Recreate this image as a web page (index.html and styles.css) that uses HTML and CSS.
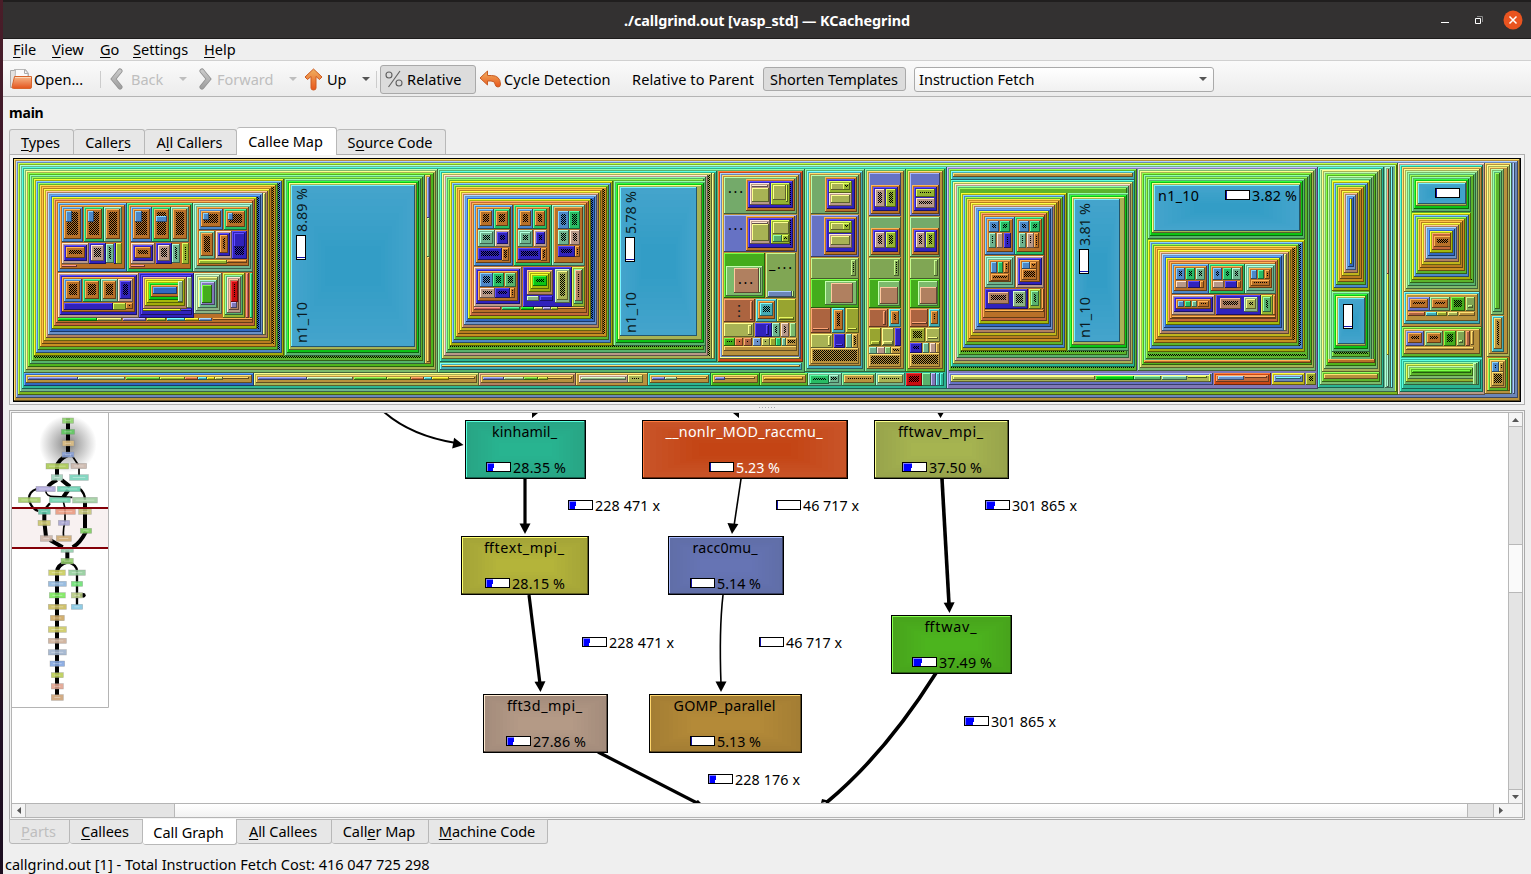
FILE: index.html
```html
<!DOCTYPE html>
<html lang="en">
<head>
<meta charset="utf-8">
<title>./callgrind.out [vasp_std] — KCachegrind</title>
<link rel="stylesheet" href="styles.css">
</head>
<body>
<div class="desktop">
<div class="window">
  <header class="titlebar">
    <span class="title">./callgrind.out [vasp_std] — KCachegrind</span>
    <svg class="winbtns" width="91" height="36" viewBox="0 0 91 36">
      <path d="M1 20.500h8" stroke="#fff"/>
      <path d="M35.500 16.500h5v5h-5z" fill="none" stroke="#fff"/>
      <path d="M37 14.500h5.500v5.500" fill="none" stroke="#888"/>
      <circle cx="73" cy="18" r="9.500" fill="#e95420"/>
      <path d="M69.500 14.500l7 7m0-7l-7 7" stroke="#fff" stroke-width="1.500"/>
    </svg>
  </header>
  <nav class="menubar">
    <span class="m1"><u>F</u>ile</span><span class="m2"><u>V</u>iew</span><span class="m3"><u>G</u>o</span><span class="m4"><u>S</u>ettings</span><span><u>H</u>elp</span>
  </nav>
  <div class="toolbar">
    <svg class="i-open" width="24" height="22" viewBox="0 0 24 22">
      <defs>
        <linearGradient id="og" x1="0" y1="0" x2="0" y2="1"><stop offset="0" stop-color="#f6b98c"/><stop offset="1" stop-color="#e4541c"/></linearGradient>
        <linearGradient id="ug" x1="0" y1="0" x2="0" y2="1"><stop offset="0" stop-color="#f0b060"/><stop offset="1" stop-color="#e8561c"/></linearGradient>
        <linearGradient id="gg" x1="0" y1="0" x2="0" y2="1"><stop offset="0" stop-color="#c8c8c8"/><stop offset="1" stop-color="#a0a0a0"/></linearGradient>
      </defs>
      <path d="M.5 2.500h4v-1h11l3 4v14h-18z" fill="#e4e2e0" stroke="#aaa"/>
      <path d="M5.500 1.500h9l3.500 4v6h-13z" fill="#fafafa" stroke="#b8b8b8"/>
      <path d="M14.500 1.500v4H18" fill="none" stroke="#aaa"/>
      <path d="M4.500 8.500h17v10.500q0 1.500-1.500 1.500H3.500q-1.500 0-1.500-1.500z" fill="url(#og)" stroke="#d8652c"/>
      <path d="M5 9.500h16" stroke="#fbd8b8"/>
    </svg>
    <span class="t-open">Open...</span>
    <i class="sep s1"></i>
    <svg class="i-back" width="13" height="22" viewBox="0 0 13 22"><path d="M10 3L3.500 11l6.500 8" fill="none" stroke="#909090" stroke-width="5" stroke-linecap="round"/><path d="M10 3L3.500 11l6.500 8" fill="none" stroke="url(#gg)" stroke-width="3.500" stroke-linecap="round"/></svg>
    <span class="t-back off">Back</span>
    <i class="arrow off a1"></i>
    <svg class="i-fwd" width="13" height="22" viewBox="0 0 13 22"><path d="M3 3l6.500 8L3 19" fill="none" stroke="#909090" stroke-width="5" stroke-linecap="round"/><path d="M3 3l6.500 8L3 19" fill="none" stroke="url(#gg)" stroke-width="3.500" stroke-linecap="round"/></svg>
    <span class="t-fwd off">Forward</span>
    <i class="arrow off a2"></i>
    <svg class="i-up" width="19" height="23" viewBox="0 0 19 23"><path d="M9.500 1L18 9l-2.500 2.500L12 8.500V20q0 2-2.500 2T7 20V8.500L3.500 11.500 1 9z" fill="url(#ug)" stroke="#cc5a20" stroke-linejoin="round"/></svg>
    <span class="t-up">Up</span>
    <i class="arrow a3"></i>
    <i class="sep s2"></i>
    <span class="btn b-rel"><svg width="19" height="18" viewBox="0 0 19 18"><g fill="none" stroke="#606060" stroke-width="1.100"><circle cx="4" cy="5" r="3"/><circle cx="14" cy="13" r="3"/><path d="M15 1L3.500 17"/></g></svg><span>Relative</span></span>
    <svg class="i-cyc" width="23" height="18" viewBox="0 0 23 18"><path d="M8.500 1v4.500h4q8.500 0 9 8.500 0 3-2.500 3t-3-3q0-3-4-3H8.500V15L1 8z" fill="url(#ug)" stroke="#c85c24" stroke-linejoin="round"/></svg>
    <span class="t-cyc">Cycle Detection</span>
    <span class="t-par">Relative to Parent</span>
    <span class="btn b-sho">Shorten Templates</span>
    <span class="combo"><span>Instruction Fetch</span><i class="arrow"></i></span>
  </div>
  <div class="fn">main</div>
  <div class="tabs top">
    <span class="tab w1"><u>T</u>ypes</span><span class="tab w2">Calle<u>r</u>s</span><span class="tab w3">A<u>l</u>l Callers</span><span class="tab w4 on">Callee Map</span><span class="tab w5">S<u>o</u>urce Code</span>
  </div>
  <div class="mapframe"><svg id="map" width="1508" height="244" viewBox="13 158 1508 244"></svg></div>
  <div class="splitter"><i></i></div>
  <div class="graphframe">
    <div class="view">
      <svg id="graph" width="1496" height="390" viewBox="12 413 1496 390"></svg>
      <div class="vbar"><b class="cap"><svg width="7" height="4"><path d="M0 4L3.500 0 7 4z" fill="#555"/></svg></b><b class="v1"></b><b class="v2"></b><b class="v3"></b><b class="cap"><svg width="7" height="4"><path d="M0 0L3.500 4 7 0z" fill="#555"/></svg></b></div>
    </div>
    <div class="hbar"><b class="cap"><svg width="4" height="7"><path d="M4 0L0 3.500 4 7z" fill="#555"/></svg></b><b class="h1"></b><b class="h2"></b><b class="h3"></b><b class="cap last"><svg width="4" height="7"><path d="M0 0L4 3.500 0 7z" fill="#555"/></svg></b></div>
  </div>
  <div class="tabs bottom">
    <span class="tab x1 off"><u>P</u>arts</span><span class="tab x2"><u>C</u>allees</span><span class="tab x3 on">Call Graph</span><span class="tab x4"><u>A</u>ll Callees</span><span class="tab x5">Call<u>e</u>r Map</span><span class="tab x6"><u>M</u>achine Code</span>
  </div>
  <footer class="status">callgrind.out [1] - Total Instruction Fetch Cost: 416 047 725 298</footer>
</div>
</div>
<script src="app.js"></script>
</body>
</html>
```
FILE: styles.css
```css
* { box-sizing: border-box; }
body { margin: 0; overflow: hidden; font-family: "Noto Sans", "Open Sans", sans-serif; font-size: 14.53px; color: #000; }
svg { display: block; flex: none; }
u { text-decoration: underline; text-underline-offset: 2px; text-decoration-thickness: 1px; text-decoration-skip-ink: none; }
.desktop { width: 1531px; height: 874px; padding-left: 3px; background: linear-gradient(#4a1d28, #30132c 40%, #1c0e20); }
.window { width: 1528px; height: 874px; background: #efefef; display: flex; flex-direction: column; white-space: nowrap; }
.titlebar { height: 39px; flex: none; background: #333131; border-top: 2px solid #201e1e; border-bottom: 1px solid #1e1c1c; display: grid; grid-template-columns: 91px 1fr 91px; align-items: center; color: #fff; }
.title { grid-column: 2; text-align: center; font-weight: 700; font-size: 14.4px; letter-spacing: -.08px; }
.menubar { height: 21px; flex: none; display: flex; padding-left: 10px; line-height: 20px; }
.m1 { width: 39px; } .m2 { width: 48px; } .m3 { width: 33px; } .m4 { width: 71px; }
.toolbar { height: 37px; flex: none; display: flex; align-items: center; border-top: 1px solid #d0d0d0; border-bottom: 1px solid #b4b4b4; background: linear-gradient(#fafafa, #ececec); padding: 1px 0 0 7px; }
.toolbar > span { flex: none; }
.off { color: #bebebe; }
.t-open { width: 66px; } .sep { width: 1px; height: 17px; background: #ccc; flex: none; }
.i-back { margin-left: 9px; } .t-back { width: 48px; margin-left: 8px; }
.arrow { width: 8px; height: 4px; background: #555; clip-path: polygon(0 0, 100% 0, 50% 100%); flex: none; }
.arrow.off { background: #bebebe; }
.i-fwd { margin-left: 12px; } .t-fwd { width: 72px; margin-left: 5px; }
.i-up { margin-left: 7px; } .t-up { width: 35px; margin-left: 4px; } .s2 { margin-left: 6px; }
.btn { border: 1px solid #a9a9a9; border-radius: 3px; background: #dcdcdc; display: flex; align-items: center; }
.b-rel { width: 96px; height: 29px; margin-left: 3px; padding-left: 4px; gap: 3px; letter-spacing: .1px; }
.i-cyc { margin-left: 3px; } .t-cyc { width: 128px; margin-left: 2px; letter-spacing: .1px; } .t-par { width: 131px; letter-spacing: .1px; }
.b-sho { width: 143px; height: 24px; padding-left: 6px; }
.combo { width: 300px; height: 25px; margin-left: 8px; border: 1px solid #aaa; border-radius: 3px; background: linear-gradient(#fff, #f1f1f1); display: flex; align-items: center; justify-content: space-between; padding: 0 6px 0 4px; }
.fn { height: 31px; flex: none; padding-left: 6px; line-height: 32px; font-weight: 700; font-size: 14px; letter-spacing: -.2px; }
.tabs { flex: none; display: flex; padding-left: 6px; }
.tabs.top { height: 27px; margin-bottom: -1px; align-items: flex-end; position: relative; }
.tab { height: 25px; border: 1px solid #b8b8b8; border-left-width: 0; background: #e7e7e7; text-align: center; line-height: 25px; letter-spacing: -.05px; padding-right: 2px; }
.tab:first-child { border-left-width: 1px; }
.top .tab { border-radius: 3px 3px 0 0; border-bottom: 0; margin-bottom: 1px; }
.tab.on { background: #fff; }
.top .tab.on { height: 28px; margin-bottom: 0; line-height: 27px; }
.w1 { width: 65px; } .w2 { width: 71px; } .w3 { width: 92px; } .w4 { width: 100px; } .w5 { width: 109px; }
.mapframe { width: 1516px; height: 251px; flex: none; margin-left: 6px; border: 1px solid #b0b0b0; padding: 3px; background: #f4f4f4; }
.splitter { height: 5px; flex: none; padding: 2px 0 0 756px; }
.splitter i { display: block; width: 18px; height: 1px; background: repeating-linear-gradient(90deg, #aaa 0 1px, transparent 1px 3px); }
.graphframe { width: 1516px; height: 410px; flex: none; margin-left: 6px; border: 1px solid #aaa; padding: 1px; background: #f4f4f4; }
.view { display: flex; border: solid #b4b4b4; border-width: 1px 1px 0 1px; background: #fff; }
.vbar { width: 14px; height: 390px; display: flex; flex-direction: column; border-left: 1px solid #b8b8b8; }
.vbar b, .hbar b { display: block; background: #e4e4e4; border: 0 solid #b8b8b8; }
.vbar .cap { height: 13px; display: flex; align-items: center; justify-content: center; background: #f4f4f4; }
.vbar .v1 { height: 119px; border-width: 1px 0; } .vbar .v2 { height: 47px; background: #fafafa; } .vbar .v3 { flex: 1; border-width: 1px 0; }
.hbar { height: 15px; display: flex; border: 1px solid #b4b4b4; }
.hbar .cap { width: 13px; display: flex; align-items: center; justify-content: center; background: #f4f4f4; }
.hbar .h1 { width: 150px; border-width: 0 1px; } .hbar .h2 { width: 1292px; background: linear-gradient(#fff, #f2f2f2); } .hbar .h3 { width: 27px; border-width: 0 1px; }
.tabs.bottom { height: 27px; margin-top: -1px; align-items: flex-start; position: relative; }
.bottom .tab { border-radius: 0 0 3px 3px; line-height: 22px; height: 25px; }
.bottom .tab.on { height: 26px; border-top: 0; line-height: 26px; }
.x1 { width: 61px; } .x2 { width: 73px; } .x3 { width: 94px; } .x4 { width: 95px; } .x5 { width: 97px; } .x6 { width: 119px; }
.status { padding-left: 2px; line-height: 20px; margin-top: 8px; }
svg text { font-family: "Noto Sans", "Open Sans", sans-serif; font-size: 14.3px; }
.px { shape-rendering: crispEdges; }
.edge { fill: none; stroke: #000; }
```
FILE: app.js
```javascript
const PAL = {
  K: '#b8913d', S: '#6b86b8', G: '#7db61f', A: '#6eb48e', T: '#2cb492', L: '#7cba6c', O: '#a8b254', H: '#50b41c',
  M: '#58b26c', g: '#5cb42c', y: '#a4ac0c', B: '#4c88c8', h: '#44ac1c', q: '#c89020', b: '#b87c20', Y: '#c0b41c',
  t: '#b08060', s: '#6a90c8', D: '#3068c0', l: '#a4b80c', r: '#c46838', n: '#b87028', E: '#0cc414', C: '#44acb4',
  V: '#8078b8', W: '#28bc64', U: '#3022bc', p: '#b89888', R: '#c80c10', o: '#94b430', a: '#8cb484', c: '#c45c54',
  J: '#6672c4', Z: '#cc4814', x: '#ac6440', j: '#98a430', F: '#40a0c8', 7: '#74aa6a', 8: '#80a654'
};
const rgb = h => [1, 3, 5].map(i => parseInt(h.substr(i, 2), 16));
const css = a => 'rgb(' + a.map(v => Math.round(Math.max(0, Math.min(255, v)))) + ')';
const light = h => css(rgb(h).map(v => v * 1.3 + 35));
const dark = h => css(rgb(h).map(v => v * 0.54));
const rect = (x, y, w, h, f) => w > 0 && h > 0 ? `<rect x="${x}" y="${y}" width="${w}" height="${h}" fill="${f}"/>` : '';

/* One bevelled tile: light top/left line, dark bottom/right line. */
function bevel(x0, y0, x1, y1, c) {
  const w = x1 - x0, h = y1 - y0;
  return rect(x0, y0, w, h, dark(c)) + rect(x0, y0, w - 1, h - 1, light(c)) + rect(x0 + 1, y0 + 1, w - 2, h - 2, c);
}
/* Stepped shading from the edge colour to the centre colour. */
function shade(x0, y0, x1, y1, edge, mid) {
  const a = rgb(edge), b = rgb(mid), n = 10;
  let s = '';
  for (let i = 0; i < n; i++) {
    const dx = Math.round((x1 - x0) * 0.3 * i / n), dy = Math.round((y1 - y0) * 0.42 * i / n);
    s += rect(x0 + dx, y0 + dy, x1 - x0 - 2 * dx, y1 - y0 - 2 * dy, css(a.map((v, k) => v + (b[k] - v) * i / (n - 1))));
  }
  return s;
}
/* Nested rings. '>' and '_' reserve a dotted strip at the right or bottom, '|' a plain one, '#' fills with dots. */
function nest(x0, y0, x1, y1, spec) {
  let s = '', base = PAL.K;
  for (const ch of spec) {
    if (ch === '#') { s += rect(x0 + 1, y0 + 1, x1 - x0 - 2, y1 - y0 - 2, 'url(#dots)'); continue; }
    if (ch === '>') { x1 -= 2; s += rect(x1, y0, 2, y1 - y0, base) + rect(x1, y0, 2, y1 - y0, 'url(#dots)'); continue; }
    if (ch === '_') { y1 -= 2; s += rect(x0, y1, x1 - x0, 2, base) + rect(x0, y1, x1 - x0, 2, 'url(#dots)'); continue; }
    if (ch === '|') { x1 -= 3; s += bevel(x1, y0, x1 + 3, y1, PAL.O); continue; }
    if (ch === '.') { s += rect(x0, y0, x1 - x0, y1 - y0, 'url(#dots)'); continue; }
    if (x1 - x0 < 2 || y1 - y0 < 2) break;
    base = PAL[ch];
    s += bevel(x0, y0, x1, y1, base);
    x0 += 2; y0 += 2; x1 -= 2; y1 -= 3;
  }
  return s;
}
/* Tile lists are in thirds of a pixel, relative to the origin of their section. */
function section(ox, oy, text) {
  return text.trim().split(/[\n;]+/).map(line => {
    const p = line.trim().split(/[ ,]+/);
    if (p.length < 5) return '';
    const v = p.slice(0, 4).map(n => Math.round(n / 3));
    const a = [ox + v[0], oy + v[1], ox + v[2], oy + v[3]];
    if (p[4] === 'F') return bevel(...a, PAL.F) + shade(a[0] + 1, a[1] + 1, a[2] - 1, a[3] - 1, '#44a4cc', '#339dc6');
    return nest(...a, p[4]);
  }).join('');
}

let m = '<defs><pattern id="dots" width="2" height="2" patternUnits="userSpaceOnUse"><rect width="1" height="1"/><rect x="1" y="1" width="1" height="1"/></pattern></defs><g class="px">';
m += rect(13, 158, 1508, 244, '#000');
m += nest(14, 159, 1520, 401, 'KS') + nest(18, 163, 1398, 395, 'GA') + nest(22, 167, 947, 389, 'T') + nest(947, 167, 1318, 389, 'V');
m += section(0, 155, `
72 42 1313 653 LOH
90 60 1275 626 Mg_
1275 60 1293 626 K
1281 66 1290 188 J; 1281 189 1290 305 L; 1282 306 1289 620 K.
102 72 852 604 yB>gq>bYt|sD>lrn
855 72 1263 604 MEO; 873 90 1245 575 F; 873 575 1248 580 O.
174 144 380 351 Bn; 180 147 376 151 B.
186 156 250 262 Bn#; 252 156 311 262 Wn#; 312 156 367 262 An#
198 168 216 200 B; 264 168 282 200 B; 186 264 266 328 pUn#; 267 264 317 328 Up#; 318 267 341 325 A#; 348 264 367 328 o#; 342 264 347 328 U
186 329 230 335 c; 230 329 368 333 n.
380 144 578 351 Wn; 386 147 572 151 W.
392 156 455 262 Bn#; 456 156 512 262 Wn#; 513 156 566 262 An#
405 168 425 200 B; 468 183 502 200 B; 392 264 466 328 pUn#; 467 264 515 328 Up#; 516 267 541 325 A#; 546 264 566 328 o#
392 329 436 335 c; 436 329 566 333 n.
579 144 760 351 AAn
597 162 670 225 Bn#; 671 162 742 225 Wn#; 609 174 628 195 B; 684 174 699 195 B
597 228 646 312 An#; 647 228 695 312 pUn#; 696 228 742 312 U#; 702 234 736 276 U
597 315 680 327 o; 681 315 740 325 n.
174 354 417 490 pUn
192 372 247 441 Bn#; 249 372 302 441 Wn#; 303 372 353 441 An#; 354 372 400 441 pU#
192 444 338 465 U#; 339 444 377 465 o#; 378 444 398 463 n.
418 354 582 490 UU
430 366 561 462 tylEnD#; 534 378 549 441 a; 562 366 576 460 a; 430 462 542 469 l; 544 462 576 469 U.
582 354 667 478 aaO; 597 375 651 460 AV; 606 390 636 444 h
669 354 736 490 oM; 681 366 724 475 pt; 692 378 714 440 R#; 692 441 712 460 V#; 737 354 748 490 c; 749 354 758 490 W
174 490 290 497 E; 290 490 367 497 O; 368 490 439 497 V; 440 490 499 497 o; 500 490 555 497 C; 556 490 597 497 Y; 598 490 637 497 s; 638 490 758 496 n.
72 653 761 692 DK; 84 665 233 674 J; 234 665 376 674 a; 377 665 479 674 g; 480 665 554 674 o; 555 665 593 674 r; 594 665 620 674 C; 621 665 644 674 Y; 645 665 668 674 O; 669 665 748 672 K.
762 653 1437 692 OK; 773 665 920 674 J; 921 665 1060 674 a; 1061 665 1161 674 g; 1162 665 1232 674 o; 1233 665 1272 674 r; 1272 665 1297 674 C; 1297 665 1347 674 Y; 1348 665 1425 672 K.
`);
m += section(430, 155, `
24 42 1125 653 M; 30 624 1116 644 CK
30 48 862 622 T|O>pMg_
60 78 550 574 yBgq>bYtsD>lrn
552 78 827 574 MEO; 570 96 800 544 F; 570 545 803 550 O.
132 150 250 333 Bn; 144 162 191 222 Bn#; 192 162 240 222 Wn#; 144 225 194 276 AA#; 195 225 239 276 pU#; 144 279 215 315 U#; 216 279 238 318 n.
252 150 365 333 Wn; 264 162 308 222 Bn#; 309 162 352 222 Wn#; 264 225 310 276 AA#; 311 225 351 276 pU#; 264 279 332 315 U#; 333 279 351 318 n.
366 150 466 333 An; 384 168 417 222 B#; 418 168 449 222 W#; 384 225 418 270 A#; 419 225 449 270 p#; 384 273 434 306 U#; 435 273 449 306 n.
132 336 277 456 pUn; 150 354 188 396 B#; 189 354 223 396 W#; 224 354 257 396 M#; 150 399 194 428 p#; 195 399 240 428 U#; 240 399 256 428 n.
278 336 425 456 U; 290 345 370 420 tylE#; 290 423 328 438 a; 330 423 368 438 U.; 375 342 420 444 aO#
426 336 466 456 oM; 436 345 457 438 t#
132 456 214 465 c; 215 456 271 465 W; 272 456 311 465 E; 312 456 338 465 O; 339 456 362 465 V; 363 456 383 465 o; 384 456 466 462 n.
147 653 437 692 tK; 159 665 221 674 J; 222 665 281 674 a; 282 665 324 674 g; 325 665 354 674 o; 355 665 425 672 K.
438 653 653 692 K; 447 659 594 683 pa; 595 659 640 683 O#
654 653 842 692 TK; 666 665 704 674 J; 705 665 740 674 a; 740 665 830 672 K.
843 653 989 692 hK; 855 665 886 674 J; 886 665 975 672 K.
990 653 1132 692 hKY
`);
m += section(700, 155, `
53 48 309 622 ZSK; 60 605 299 613 O
72 66 290 176 7; 138 72 286 167 nU>; 150 84 211 150 p; 155 98 207 142 O; 156 90 204 96 p.; 212 84 271 150 o; 218 90 257 136 O; 258 90 264 142 o.
72 180 290 292 J; 138 183 286 288 nU>; 150 195 211 267 p; 155 208 207 258 O; 156 201 204 207 p.; 212 195 271 267 o; 218 201 267 238 O; 218 240 246 261 M; 246 240 266 261 o.
72 294 196 429 h; 78 333 190 422 L; 102 339 177 413 t; 178 339 184 413 L.
198 294 289 429 8; 204 408 275 426 S; 276 408 282 426 8.
72 432 166 502 x; 150 438 160 495 x.; 168 432 230 502 CnC#; 231 432 289 502 j; 237 486 282 496 j.
72 504 163 547 O; 145 510 156 541 O.; 165 504 215 547 U; 198 510 207 541 U.; 216 504 241 547 A#; 243 504 268 547 p#; 270 504 289 547 L#
72 549 104 574 h#; 105 549 130 574 r#; 131 549 157 574 x#; 158 549 184 574 s#; 185 549 210 574 O#; 211 549 228 574 j#; 229 549 244 574 W; 245 549 258 574 A; 259 549 290 573 K.; 72 573 290 588 K.
315 42 495 652 MCK
333 60 476 178 7; 375 66 470 170 nU; 387 78 457 113 oO; 387 114 457 153 pO; 430 84 450 104 o.
333 180 476 306 J; 372 186 470 300 nU; 387 198 457 235 oO; 387 237 457 279 pO; 430 204 450 226 o.
333 309 476 371 8; 453 315 468 362 8.; 333 372 476 458 h; 375 378 470 450 L; 393 384 460 443 t
333 460 394 535 x; 339 519 388 525 x.; 396 460 436 535 Cn#; 437 460 476 535 j; 443 519 470 525 j.
333 537 400 580 O; 384 543 393 572 O.; 401 537 436 580 U; 407 566 430 572 U.; 437 537 456 580 A#; 457 537 475 580 K.; 333 580 476 628 K.
496 42 617 652 MK
507 54 603 183 J; 513 90 600 177 nU; 525 102 556 156 p#; 557 102 588 156 o#
507 186 603 306 7; 513 219 600 300 nU; 525 231 556 279 p#; 557 231 588 279 o#
507 309 603 371 8; 582 315 597 362 8.; 507 372 603 458 h; 534 378 600 452 L; 540 396 594 446 t
507 462 565 517 x; 549 468 558 510 x.; 567 462 603 517 Cn#; 507 519 544 574 j; 512 558 540 570 j.; 546 519 583 574 O; 550 558 578 570 O.; 585 519 603 574 U#
507 576 530 598 A#; 531 576 554 598 p#; 555 576 573 598 L#; 574 576 603 598 K.; 507 598 603 636 K.
618 42 735 652 gK
630 54 720 183 J; 636 90 717 177 nU; 648 102 705 126 o#; 648 129 705 158 p#
630 186 720 306 7; 636 219 717 300 nU; 648 231 676 279 p#; 677 231 705 279 o#
630 309 720 371 8; 702 315 714 362 8.; 630 372 720 458 h; 654 378 715 452 L; 660 396 711 446 t
630 462 685 517 x; 636 500 680 508 x.; 687 462 720 517 Cn#; 630 519 676 561 j#; 678 519 720 561 O; 684 545 715 552 O.
630 564 667 593 U#; 669 564 688 593 A#; 690 564 707 593 p; 707 564 720 593 K.; 630 594 720 636 K.
180 653 323 692 gK; 192 665 310 674 q; 324 653 425 692 A; 330 659 386 686 W#; 387 659 416 683 A.; 426 653 527 692 MK#; 528 653 616 692 AO#
618 653 665 692 R#; 666 653 692 692 M; 693 653 708 692 V; 709 653 719 692 C; 720 653 733 692 T.
`);
m += section(940, 155, `
27 42 592 649 g_; 33 48 586 74 CK; 33 76 586 637 TOpMg_
63 114 382 588 yBgqbYtsDlrn; 384 114 568 588 MEO; 402 132 540 560 F; 402 560 543 565 O.
135 186 224 300 Bn; 147 198 177 231 B#; 179 198 211 231 W#; 147 234 169 278 A#; 171 234 190 278 p#; 192 234 212 278 U#
226 186 311 300 Wn; 237 198 268 231 B#; 270 198 299 231 W#; 237 234 259 278 A#; 261 234 281 278 p#; 282 234 298 278 n.
135 303 225 399 AAn; 153 321 171 354 B#; 173 321 190 354 W#; 191 321 208 354 n.; 153 356 208 378 n.
228 303 311 399 pUn; 246 321 270 341 B#; 270 321 292 341 n.; 246 343 292 375 n.
135 402 265 462 U; 145 412 208 446 t#; 218 408 257 455 a#; 267 402 304 462 oM#; 305 402 311 462 n.; 135 465 311 470 n.
595 42 1128 649 LOHMg_; 612 614 1112 624 n
625 72 1096 253 MEO; 642 90 1080 228 F
625 255 1096 590 yB>gq>bYt|sDlrn
697 327 806 417 Bn; 708 339 735 376 B#; 737 339 765 376 W#; 767 339 794 376 A#; 708 378 741 399 p#; 743 378 779 399 U#; 780 378 792 399 n.
807 327 914 417 Wn; 819 339 846 376 B#; 848 339 875 376 W#; 877 339 903 376 A#; 819 378 853 399 p#; 855 378 890 399 U#; 891 378 902 399 n.
915 327 1009 417 AAn; 933 345 951 373 B#; 953 345 973 373 W#; 974 345 990 373 n.; 933 376 990 394 n.
697 420 825 480 pUn; 714 438 733 456 B#; 735 438 754 456 W#; 756 438 772 456 A#; 774 438 806 456 n.
827 420 962 480 U; 839 430 902 463 t#; 912 426 953 470 aO#; 963 420 998 480 oM#; 1000 420 1009 480 n.; 697 483 1009 489 n.
27 653 820 690 JO; 39 663 466 675 O; 467 663 581 675 E; 582 663 664 675 M; 665 663 742 675 A; 743 663 800 670 o.; 806 658 812 682 o.
821 653 994 690 Zr; 833 663 913 675 s; 914 663 980 670 r.; 996 653 1096 690 YSC; 1098 653 1128 690 j#
`);
m += section(1300, 155, `
53 36 253 700 TL_; 65 44 241 650 OLHLMg_; 84 613 225 623 n; 66 651 240 682 gKr
96 78 211 409 yBgqbYtsDl; 96 411 211 590 MEO; 113 429 195 567 F
255 36 272 700 A; 261 42 267 356 x; 261 357 267 600 Y; 261 601 267 695 A.; 273 36 280 700 C; 285 30 290 710 G.
293 24 556 720 pT; 305 36 546 515 K; 311 42 540 411 OLMg_; 335 66 513 172 MEO; 353 84 498 146 F; 500 84 505 150 O.
335 175 513 374 yBgqbYtsDlr#; 402 243 452 275 n#
311 412 540 507 CK; 323 426 389 468 Jn#; 390 426 450 468 7n#; 454 426 496 468 h#; 498 426 526 468 8; 504 450 520 458 8.; 323 471 376 484 x; 378 471 410 484 C; 411 471 442 484 j; 443 471 475 484 O; 476 471 525 484 K.; 323 486 534 490 K.
305 515 545 606 gK; 317 528 373 574 Jn#; 375 528 430 574 7n#; 432 528 469 574 h#; 470 528 496 574 8; 476 555 490 563 8.; 497 528 511 574 x; 512 528 522 570 K.; 318 576 522 585 K.
299 610 550 712 TT; 311 621 536 690 MoLgh; 520 624 531 690 L.
556 24 636 718 Kb; 562 30 630 606 OK; 573 42 612 480 LMgW; 575 483 612 590 CK#
564 609 625 708 gK; 575 620 598 650 B#; 598 620 612 650 K.; 575 650 612 692 K.; 631 24 636 718 A; 639 24 646 718 S.
`);
/* Small cost meter with a black frame. */
function meter(x, y, f, vertical) {
  const w = vertical ? 10 : 25, h = vertical ? 25 : 10;
  let s = '<g class="px">' + rect(x, y, w, h, '#000') + rect(x + 1, y + 1, w - 2, h - 2, '#fff');
  if (vertical) s += rect(x + 1, y + h - 3, w - 2, 1, '#11a');
  else {
    s += rect(x + 1, y + 1, Math.max(1, f), 8, f > 2 ? '#00f' : '#11a');
    if (f > 2) s += rect(x + 1, y + 1, f, 1, '#8080ff') + rect(x + 1, y + 1, 1, 8, '#8080ff') + rect(x + f, y + 6, 1, 3, '#fff');
  }
  return s + '</g>';
}
m += '</g>';
const up = (x, y, len, t) => `<text transform="translate(${x} ${y}) rotate(-90)" textLength="${len}" fill="#0b1b22">${t}</text>`;
m += up(307, 232, 44, '8.89 %') + up(307, 343, 41, 'n1_10') + meter(296, 235, 2, true);
m += up(636, 234, 43, '5.78 %') + up(636, 333, 41, 'n1_10') + meter(625, 237, 2, true);
m += up(1090, 246, 43, '3.81 %') + up(1090, 338, 41, 'n1_10') + meter(1079, 249, 2, true);
m += '<text x="1158" y="201" textLength="41">n1_10</text><text x="1252" y="201" textLength="45">3.82 %</text>' + meter(1225, 190, 1);
m += meter(1435, 188, 1) + meter(1343, 304, 2, true);
m += '<text x="728" y="193" textLength="15">...</text><text x="728" y="230" textLength="15">...</text><text x="738" y="284" textLength="15">...</text><text x="769" y="269" textLength="23">_...</text>';
m += up(740, 318, 14, '...');
document.getElementById('map').innerHTML = m;

/* Call graph */
const nodes = [
  [465, 420, 121, 59, '#28a585', '#28b490', 'kinhamil_', 65, '28.35 %', 486, 7],
  [461, 536, 128, 59, '#a4a438', '#b4b43a', 'fftext_mpi_', 80, '28.15 %', 485, 7],
  [483, 694, 125, 59, '#a48c7c', '#b49a86', 'fft3d_mpi_', 75, '27.86 %', 506, 7],
  [642, 420, 206, 59, '#c85428', '#c44414', '__nonlr_MOD_raccmu_', 157, '5.23 %', 709, 1],
  [668, 536, 116, 59, '#606ea8', '#6674b4', 'racc0mu_', 65, '5.14 %', 690, 1],
  [649, 694, 153, 59, '#a47e34', '#b48a38', 'GOMP_parallel', 102, '5.13 %', 690, 1],
  [874, 420, 135, 59, '#98a44c', '#a6b450', 'fftwav_mpi_', 85, '37.50 %', 902, 9],
  [891, 615, 121, 59, '#48a41c', '#4cb41e', 'fftwav_', 52, '37.49 %', 912, 9]
];
const head = (x, y, a) => `<path transform="translate(${x} ${y}) rotate(${a})" d="M-5.500 -10.500h11L0 0z"/>`;
let g = '';
[['M525 479V526', 3.2], ['M529 595L540 684', 3.2], ['M598 752L697 803', 3.2], ['M741 479L734 526', 1.6], ['M723 595Q719 630 721 684', 1.6],
 ['M942 479L949 604', 3.6], ['M936 673Q885 754 826 803', 3.6], ['M384 412C400 426 425 438 456 443', 2]]
  .forEach(([d, w]) => { g += `<path class="edge" d="${d}" stroke-width="${w}"/>`; });
g += head(525, 534, 0) + head(540.5, 692, -3) + head(732, 534, 5) + head(721, 692, 0) + head(949.5, 613, -2) + head(463.5, 445, -80);
g += '<path d="M532 413h6l-6 5zM733 413h6v5zM937.500 413h6l-3 5zM693 803l5-3 3 3zM821 803l1-4 8 2z"/>';
for (const [x, y, w, h, e, c, name, nl, pct, mx, f] of nodes) {
  const ink = name[0] === '_' && name[1] === '_' ? '#fff' : '#000';
  g += '<g class="px">' + rect(x, y, w, h, '#000') + bevel(x + 1, y + 1, x + w - 1, y + h - 1, c) + shade(x + 2, y + 2, x + w - 2, y + h - 2, e, c) + '</g>';
  g += `<text x="${x + w / 2 - nl / 2 - 1}" y="${y + 17}" textLength="${nl}" fill="${ink}">${name}</text>` + meter(mx, y + 42, f);
  g += `<text x="${mx + 27}" y="${y + 53}" textLength="${pct.length > 6 ? 53 : 44}" fill="${ink}">${pct}</text>`;
}
[[568, 500, '228 471 x', 7, 65], [582, 637, '228 471 x', 7, 65], [708, 774, '228 176 x', 7, 65], [776, 500, '46 717 x', 1, 56],
 [759, 637, '46 717 x', 1, 56], [985, 500, '301 865 x', 9, 65], [964, 716, '301 865 x', 9, 65]]
  .forEach(([x, y, t, f, l]) => { g += meter(x, y, f) + `<text x="${x + 27}" y="${y + 11}" textLength="${l}">${t}</text>`; });

/* Overview panel, in thirds of a pixel */
const mini = [[186, 38, 222, 56, '#8cd468'], [183, 72, 225, 89, '#5cc85c'], [186, 106, 223, 124, '#e0c084'], [185, 140, 223, 158, '#8ca4dc'],
  [137, 174, 207, 193, '#a8c850'], [212, 174, 261, 192, '#c8b4a8'], [153, 208, 189, 227, '#9cd0b8'], [208, 208, 266, 227, '#74d0b8'],
  [107, 243, 167, 261, '#a8a0d8'], [171, 243, 242, 261, '#60ccac'], [54, 276, 122, 294, '#a0cc60'], [147, 276, 212, 294, '#64d0a8'], [217, 276, 293, 295, '#9ccc9c'],
  [114, 311, 152, 329, '#58c4a4'], [166, 311, 227, 329, '#e8967c'], [235, 311, 275, 329, '#c4c478'], [113, 345, 152, 363, '#c8c468'], [174, 345, 210, 362, '#a4a0d0'],
  [240, 369, 276, 386, '#78cc58'], [120, 391, 158, 410, '#c8b0a4'], [168, 391, 215, 410, '#cca870'], [182, 432, 221, 443, '#8ccca8'], [182, 459, 221, 478, '#90cc68'],
  [145, 494, 197, 512, '#c8cc58'], [205, 494, 257, 512, '#90cc98'], [144, 528, 200, 545, '#8cb4dc'], [213, 528, 249, 545, '#68e070'], [147, 562, 197, 580, '#78e858'],
  [213, 562, 249, 580, '#b4c880'], [144, 597, 200, 614, '#c8b858'], [213, 597, 249, 614, '#80c4e0'], [150, 630, 194, 648, '#cca45c'], [144, 664, 200, 683, '#ccc860'],
  [144, 699, 200, 716, '#ccac94'], [144, 733, 200, 751, '#9cb0cc'], [149, 767, 195, 785, '#80a4e0'], [153, 802, 191, 819, '#b8cc50'], [153, 835, 191, 853, '#e0a08c'], [153, 868, 191, 887, '#cca074']];
g += '<defs><radialGradient id="halo"><stop offset="0" stop-color="#777"/><stop offset=".3" stop-color="#aaa"/><stop offset="1" stop-color="#fff"/></radialGradient></defs>';
g += '<path d="M108.500 413v294.500H12" fill="#fff" stroke="#b4b4b4"/><g transform="translate(0 405) scale(.33333)"><circle cx="204" cy="117" r="86" fill="url(#halo)"/>';
g += '<rect x="36" y="310" width="288" height="118" fill="#f8f1f1"/><g fill="none" stroke="#000">';
g += '<path stroke-width="12" d="M204 40V150Q172 165 171 185V215M171 225Q150 235 145 245M185 225L210 245M202 435V470Q172 480 171 500V870M133 320V350L138 395M255 290V370M258 380Q240 415 218 427M150 405L188 427M205 255L190 276"/>';
g += '<path stroke-width="7" d="M110 252Q85 260 87 285Q95 312 115 318M240 252Q255 265 255 285M150 295L135 312M202 470Q232 480 231 500V600M240 571H252"/>';
g += '<path stroke-width="5" d="M215 150L235 180M237 190V212M190 290L195 311V350Q188 375 191 395M137 255Q137 276 165 275L217 277"/></g><circle cx="250" cy="571" r="7"/>';
for (const [a, b, c, d, f] of mini) g += `<rect x="${a + 1}" y="${b + 1}" width="${c - a - 2}" height="${d - b - 2}" fill="${f}" fill-opacity=".88" stroke="#888" stroke-opacity=".45" stroke-width="2"/><path d="M${a + 10} ${(b + d) / 2}H${c - 10}" stroke="#fff" stroke-opacity=".35" stroke-width="3"/>`;
g += '<path d="M36 309H324M36 429H324" stroke="#840008" stroke-width="6"/></g>';
document.getElementById('graph').innerHTML = g;
```
